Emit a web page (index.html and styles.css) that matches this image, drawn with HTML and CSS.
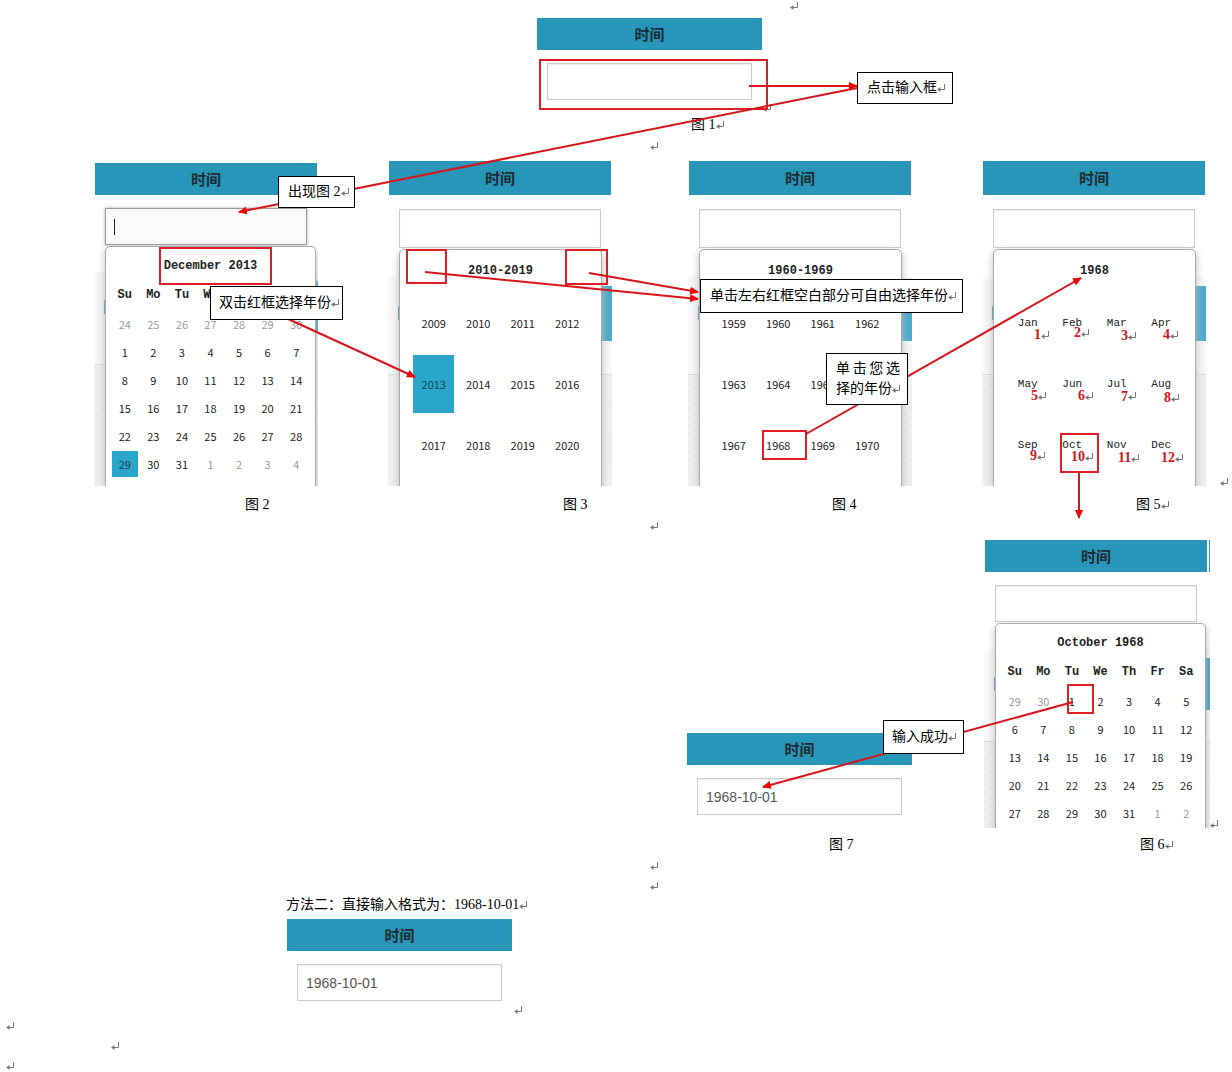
FILE: index.html
```
<!DOCTYPE html>
<html lang="zh-CN">
<head>
<meta charset="utf-8">
<title>时间输入说明</title>
<link rel="stylesheet" href="styles.css">
</head>
<body>
<svg class="defs" aria-hidden="true">
  <defs>
    <g id="ret"><path d="M7.500 0v5.500H2" fill="none" stroke="#777"/><path d="M0 5.500L3.500 3v5z" fill="#777"/></g>
    <marker id="head" viewBox="0 0 9 8" refX="8" refY="4" markerWidth="9" markerHeight="8" markerUnits="userSpaceOnUse" orient="auto"><path d="M0 0L9 4L0 8z" fill="#f00000"/></marker>
  </defs>
</svg>
<main class="sheet">
  <section class="row row-first">
    <figure class="fig plain">
      <label class="bar" for="t1">时间</label>
      <input class="field" id="t1" type="text">
      <figcaption class="cap-1">图 1<svg class="ret"><use href="#ret"/></svg></figcaption>
    </figure>
  </section>

  <section class="row row-pickers">
    <figure class="fig">
      <div class="shot shot-days">
        <label class="bar" for="t2">时间</label>
        <input class="field focused" id="t2" type="text">
        <div class="popup">
          <table class="days">
            <thead>
              <tr><th class="title" colspan="7">December 2013</th></tr>
              <tr><th>Su</th><th>Mo</th><th>Tu</th><th>We</th><th>Th</th><th>Fr</th><th>Sa</th></tr>
            </thead>
            <tbody>
              <tr><td class="off">24</td><td class="off">25</td><td class="off">26</td><td class="off">27</td><td class="off">28</td><td class="off">29</td><td class="off">30</td></tr>
              <tr><td>1</td><td>2</td><td>3</td><td>4</td><td>5</td><td>6</td><td>7</td></tr>
              <tr><td>8</td><td>9</td><td>10</td><td>11</td><td>12</td><td>13</td><td>14</td></tr>
              <tr><td>15</td><td>16</td><td>17</td><td>18</td><td>19</td><td>20</td><td>21</td></tr>
              <tr><td>22</td><td>23</td><td>24</td><td>25</td><td>26</td><td>27</td><td>28</td></tr>
              <tr><td><span class="picked">29</span></td><td>30</td><td>31</td><td class="off">1</td><td class="off">2</td><td class="off">3</td><td class="off">4</td></tr>
            </tbody>
          </table>
        </div>
      </div>
      <figcaption class="cap-2">图 2</figcaption>
    </figure>

    <figure class="fig">
      <div class="shot">
        <label class="bar" for="t3">时间</label>
        <input class="field" id="t3" type="text">
        <div class="popup">
          <table class="years">
            <thead><tr><th class="title" colspan="4">2010-2019</th></tr></thead>
            <tbody>
              <tr><td>2009</td><td>2010</td><td>2011</td><td>2012</td></tr>
              <tr><td><span class="picked">2013</span></td><td>2014</td><td>2015</td><td>2016</td></tr>
              <tr><td>2017</td><td>2018</td><td>2019</td><td>2020</td></tr>
            </tbody>
          </table>
        </div>
      </div>
      <figcaption class="cap-3">图 3</figcaption>
    </figure>

    <figure class="fig">
      <div class="shot">
        <label class="bar" for="t4">时间</label>
        <input class="field" id="t4" type="text">
        <div class="popup">
          <table class="years">
            <thead><tr><th class="title" colspan="4">1960-1969</th></tr></thead>
            <tbody>
              <tr><td>1959</td><td>1960</td><td>1961</td><td>1962</td></tr>
              <tr><td>1963</td><td>1964</td><td>1965</td><td>1966</td></tr>
              <tr><td>1967</td><td>1968</td><td>1969</td><td>1970</td></tr>
            </tbody>
          </table>
        </div>
      </div>
      <figcaption class="cap-4">图 4</figcaption>
    </figure>

    <figure class="fig">
      <div class="shot">
        <label class="bar" for="t5">时间</label>
        <input class="field" id="t5" type="text">
        <div class="popup">
          <table class="years months">
            <thead><tr><th class="title" colspan="4">1968</th></tr></thead>
            <tbody>
              <tr><td>Jan</td><td>Feb</td><td>Mar</td><td>Apr</td></tr>
              <tr><td>May</td><td>Jun</td><td>Jul</td><td>Aug</td></tr>
              <tr><td>Sep</td><td>Oct</td><td>Nov</td><td>Dec</td></tr>
            </tbody>
          </table>
        </div>
      </div>
      <figcaption class="cap-5">图 5<svg class="ret"><use href="#ret"/></svg></figcaption>
    </figure>
  </section>

  <section class="row row-result">
    <figure class="fig plain">
      <label class="bar" for="t7">时间</label>
      <input class="field" id="t7" type="text" value="1968-10-01">
      <figcaption class="cap-7">图 7</figcaption>
    </figure>
    <figure class="fig">
      <div class="shot shot-days shot-short">
        <label class="bar" for="t6">时间</label>
        <input class="field" id="t6" type="text">
        <div class="popup">
          <table class="days">
            <thead>
              <tr><th class="title" colspan="7">October 1968</th></tr>
              <tr><th>Su</th><th>Mo</th><th>Tu</th><th>We</th><th>Th</th><th>Fr</th><th>Sa</th></tr>
            </thead>
            <tbody>
              <tr><td class="off">29</td><td class="off">30</td><td>1</td><td>2</td><td>3</td><td>4</td><td>5</td></tr>
              <tr><td>6</td><td>7</td><td>8</td><td>9</td><td>10</td><td>11</td><td>12</td></tr>
              <tr><td>13</td><td>14</td><td>15</td><td>16</td><td>17</td><td>18</td><td>19</td></tr>
              <tr><td>20</td><td>21</td><td>22</td><td>23</td><td>24</td><td>25</td><td>26</td></tr>
              <tr><td>27</td><td>28</td><td>29</td><td>30</td><td>31</td><td class="off">1</td><td class="off">2</td></tr>
            </tbody>
          </table>
        </div>
      </div>
      <figcaption class="cap-6">图 6<svg class="ret"><use href="#ret"/></svg></figcaption>
    </figure>
  </section>

  <section class="method">
    <p>方法二：直接输入格式为：1968-10-01<svg class="ret"><use href="#ret"/></svg></p>
    <div class="fig plain">
      <label class="bar" for="t8">时间</label>
      <input class="field" id="t8" type="text" value="1968-10-01">
    </div>
  </section>

  <svg class="overlay">
    <g class="marks">
      <use href="#ret" x="790" y="2"/><use href="#ret" x="763" y="104"/><use href="#ret" x="650" y="142"/>
      <use href="#ret" x="1220" y="478"/><use href="#ret" x="650" y="522"/><use href="#ret" x="1210" y="820"/>
      <use href="#ret" x="650" y="862"/><use href="#ret" x="650" y="882"/><use href="#ret" x="514" y="1006"/>
      <use href="#ret" x="6" y="1022"/><use href="#ret" x="111" y="1042"/><use href="#ret" x="6" y="1062"/>
      <use href="#ret" x="1041" y="331"/><use href="#ret" x="1081" y="329"/><use href="#ret" x="1128" y="332"/><use href="#ret" x="1170" y="331"/>
      <use href="#ret" x="1038" y="392"/><use href="#ret" x="1085" y="392"/><use href="#ret" x="1128" y="392"/><use href="#ret" x="1171" y="394"/>
      <use href="#ret" x="1037" y="452"/><use href="#ret" x="1085" y="453"/><use href="#ret" x="1131" y="454"/><use href="#ret" x="1175" y="454"/>
    </g>
    <g class="boxes">
      <rect x="540" y="60" width="227" height="49"/>
      <rect x="160" y="248" width="111" height="36"/>
      <rect x="407" y="250" width="39" height="33"/>
      <rect x="566" y="250" width="41" height="34"/>
      <rect x="763" y="431" width="43" height="28"/>
      <rect x="1061" y="434" width="37" height="38"/>
      <rect x="1068" y="685" width="25" height="28"/>
    </g>
    <g class="arrows">
      <path d="M749 86H857"/>
      <path d="M857 88L239 212"/>
      <path d="M286 318L415 377"/>
      <path d="M425 272L698 299"/>
      <path d="M589 273L698 292"/>
      <path d="M806 434L1081 278"/>
      <path d="M1079 472V518"/>
      <path d="M1073 702L763 787"/>
    </g>
    <g class="numbers">
      <text x="1034" y="339">1</text><text x="1074" y="337">2</text><text x="1121" y="340">3</text><text x="1163" y="339">4</text>
      <text x="1031" y="400">5</text><text x="1078" y="400">6</text><text x="1121" y="401">7</text><text x="1164" y="402">8</text>
      <text x="1030" y="460">9</text><text x="1071" y="461">10</text><text x="1118" y="462">11</text><text x="1161" y="462">12</text>
    </g>
  </svg>

  <div class="note note-click">点击输入框<svg class="ret"><use href="#ret"/></svg></div>
  <div class="note note-appear">出现图 2<svg class="ret"><use href="#ret"/></svg></div>
  <div class="note note-double">双击红框选择年份<svg class="ret"><use href="#ret"/></svg></div>
  <div class="note note-blank">单击左右红框空白部分可自由选择年份<svg class="ret"><use href="#ret"/></svg></div>
  <div class="note note-year"><span class="spread">单击您选</span>择的年份<svg class="ret"><use href="#ret"/></svg></div>
  <div class="note note-done">输入成功<svg class="ret"><use href="#ret"/></svg></div>
</main>
</body>
</html>
```
FILE: styles.css
```
* {
  box-sizing: border-box;
}

body {
  margin: 0;
  background: #fff;
  color: #000;
  font: 14px/20px "Liberation Serif", "Noto Sans CJK SC", serif;
}

.defs {
  position: absolute;
  width: 0;
  height: 0;
}

.sheet {
  position: relative;
  padding: 18px 0 71px;
  overflow: hidden;
}

.row {
  display: flex;
}

.row-first {
  padding-left: 537px;
}

.row-pickers {
  display: grid;
  grid-template-columns: 294px 300px 294px 224px;
  margin-top: 26px;
  padding-left: 94px;
}

.row-result {
  align-items: flex-end;
  gap: 72px;
  margin-top: 25px;
  padding-left: 687px;
}

.fig {
  margin: 0;
}

.plain {
  width: 225px;
}

.bar {
  display: block;
  background: #2896b8;
  color: #1c2b33;
  font: bold 15px/32px "Noto Sans CJK SC", sans-serif;
  text-align: center;
}

.field {
  display: block;
  width: 205px;
  height: 37px;
  margin: 13px 0 0 10px;
  padding: 0 8px;
  border: 1px solid #ccc;
  background: #fff;
  box-shadow: inset 0 1px 2px #eee;
  color: #555;
  font: 14px "Liberation Sans", sans-serif;
  outline: none;
}

.shot {
  width: 224px;
  height: 325px;
  padding: 0 1px;
  overflow: hidden;
  background:
    linear-gradient(#4aabcd, #4aabcd) right 125px / 20px 55px no-repeat,
    linear-gradient(#2896b8, #2896b8) 10px 145px / 4px 14px no-repeat,
    linear-gradient(transparent 213px, #ddd 213px, #ddd 214px, transparent 214px),
    repeating-linear-gradient(135deg, #eee 0 3px, #f1f1f1 3px 6px) 0 214px no-repeat,
    linear-gradient(#fff 116px, #f8f8f8 116px);
}

.shot .bar {
  line-height: 34px;
}

.shot .field {
  width: 202px;
  height: 39px;
  margin-top: 14px;
}

.popup {
  width: 203px;
  height: 300px;
  margin: 1px 0 0 10px;
  border: 1px solid #aaa;
  border-radius: 5px;
  background: #fff;
  box-shadow: 0 3px 8px #bbb;
}

.shot-days {
  margin-top: 2px;
  height: 323px;
  background:
    linear-gradient(#2f9bbd, #2f9bbd) right 118px / 20px 52px no-repeat,
    linear-gradient(#2896b8, #2896b8) 10px 137px / 4px 14px no-repeat,
    linear-gradient(transparent 201px, #ddd 201px, #ddd 202px, transparent 202px),
    repeating-linear-gradient(135deg, #eee 0 3px, #f1f1f1 3px 6px) 0 202px no-repeat,
    linear-gradient(#fff 109px, #f8f8f8 109px);
}

.shot-short {
  width: 226px;
  height: 288px;
  margin-top: 0;
  padding-right: 3px;
}

.shot-short .bar {
  box-shadow: 2px 0 #fff, 3px 0 #2896b8;
}

.shot-days .bar {
  line-height: 32px;
}

.shot-days .field {
  height: 37px;
  margin-top: 13px;
}

.shot-days .popup {
  width: 211px;
  padding: 5px 4px;
}

.shot .focused {
  border-color: #999;
  background: linear-gradient(#222, #222) 8px 10px / 1px 16px no-repeat #fafafa;
  box-shadow: 0 0 3px #aaa;
}

table {
  margin: 0 auto;
  border-collapse: collapse;
  table-layout: fixed;
  color: #222;
  font: 11px/14px "Noto Sans CJK SC", sans-serif;
}

th,
td {
  padding: 0;
  text-align: center;
}

th {
  font: bold 12px/14px "Liberation Mono", monospace;
}

.days {
  width: 200px;
}

.days tr {
  height: 28px;
}

.days thead tr + tr {
  height: 30px;
}

.years {
  width: 178px;
}

.years thead tr {
  height: 42px;
}

.years tbody tr {
  height: 61px;
}

.months td {
  font: 11px/14px "Liberation Mono", monospace;
}

.off {
  color: #999;
}

.picked {
  display: block;
  margin: 0 auto;
  background: #2ba6cb;
  color: #12404f;
}

.days .picked {
  width: 26px;
  line-height: 26px;
}

.years .picked {
  width: 41px;
  line-height: 58px;
}

figcaption {
  margin-top: 9px;
}

.cap-1 {
  margin-top: 15px;
  padding-left: 154px;
}

.cap-2 {
  padding-left: 151px;
}

.cap-3 {
  padding-left: 175px;
}

.cap-4 {
  padding-left: 144px;
}

.cap-5 {
  padding-left: 154px;
}

.cap-6 {
  margin-top: 7px;
  padding-left: 156px;
}

.cap-7 {
  margin-top: 20px;
  padding-left: 142px;
}

.method {
  margin-top: 40px;
  padding-left: 286px;
}

.method p {
  margin: 0 0 4px;
}

.method .fig {
  margin-left: 1px;
}

.ret {
  width: 8px;
  height: 8px;
}

.overlay {
  position: absolute;
  inset: 0;
  width: 100%;
  height: 100%;
  pointer-events: none;
}

.boxes {
  fill: none;
  stroke: #dc1f26;
  stroke-width: 2;
}

.arrows {
  fill: none;
  stroke: #d8141a;
  stroke-width: 2;
}

.arrows path {
  marker-end: url(#head);
}

.numbers {
  fill: #d8141a;
  font: bold 14px "Liberation Serif", serif;
}

.note {
  position: absolute;
  padding: 5px 7px 5px 9px;
  border: 1px solid #000;
  background: #fff;
  white-space: nowrap;
}

.note-click {
  left: 857px;
  top: 72px;
}

.note-appear {
  left: 278px;
  top: 176px;
  padding-right: 5px;
}

.note-double {
  left: 210px;
  top: 286px;
  padding: 6px 3px 6px 8px;
}

.note-blank {
  left: 700px;
  top: 279px;
  padding: 6px 6px 6px 9px;
}

.note-year {
  left: 826px;
  top: 353px;
}

.note-done {
  left: 883px;
  top: 720px;
  padding: 6px 7px 6px 8px;
}

.spread {
  display: block;
  text-align: justify;
  text-align-last: justify;
  text-justify: inter-character;
}
```
